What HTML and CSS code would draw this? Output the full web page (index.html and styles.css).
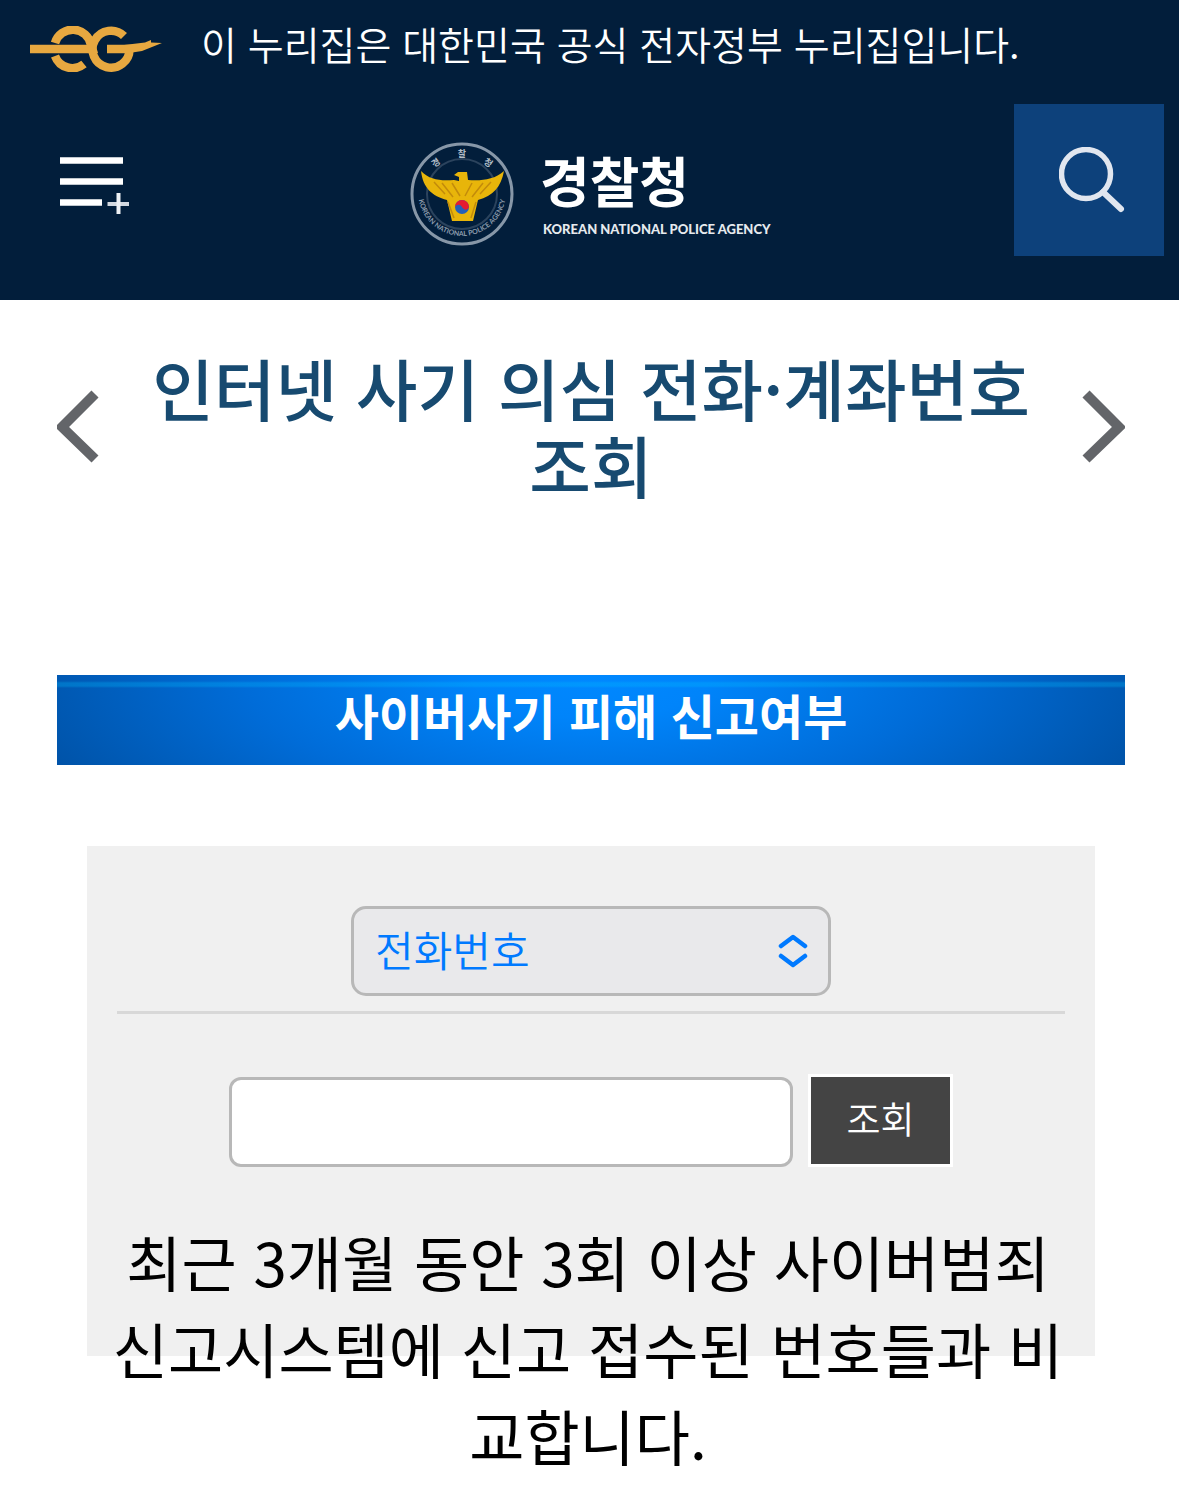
FILE: index.html
```html
<!DOCTYPE html>
<html lang="ko">
<head>
<meta charset="utf-8">
<meta name="viewport" content="width=device-width">
<title>경찰청</title>
<link rel="stylesheet" href="styles.css">
</head>
<body>
<header class="site-header">
  <div class="gov-bar">
    <svg class="gov-mark" viewBox="0 0 132 46" aria-hidden="true">
      <g fill="none" stroke="#e7a840" stroke-width="8.500">
        <path d="M0 23H62"/>
        <path d="M25 17A18.500 18.500 0 0 1 61 19L64 28"/>
        <path d="M25 30A18.500 18.500 0 0 0 54 38"/>
        <path d="M94 10A18.500 18.500 0 1 0 99.500 23H77"/>
      </g>
      <path d="M94 19L115 16.500L121 14L121 16.500L132 17L112 25L96 27.500Z" fill="#e7a840"/>
    </svg>
    <p class="gov-text">이 누리집은 대한민국 공식 전자정부 누리집입니다.</p>
  </div>
  <div class="nav-bar">
    <button class="icon-button menu-button" type="button" aria-label="전체 메뉴">
      <svg width="70" height="58" viewBox="0 0 70 58" aria-hidden="true">
        <path d="M0 3.500H63M0 24.500H63M0 45.500H42" fill="none" stroke="#fff" stroke-width="6.500"/>
        <path d="M47.500 47H69" fill="none" stroke="#d3d9e0" stroke-width="4"/>
        <path d="M58.500 36V57" fill="none" stroke="#eef1f4" stroke-width="4"/>
      </svg>
    </button>
    <a class="logo" href="#" aria-label="경찰청">
      <svg width="360" height="104" viewBox="0 0 360 104">
        <defs>
          <path id="ring-low" d="M8 50A44 44 0 0 0 96 50"/>
        </defs>
        <circle cx="52" cy="52" r="50" fill="none" stroke="#8797a8" stroke-width="3"/>
        <circle cx="52" cy="52" r="35" fill="none" stroke="#2b435d" stroke-width="2"/>
        <g class="ring-korean">
          <text x="52" y="15">찰</text>
          <text x="26" y="24" transform="rotate(-35 26 21)">경</text>
          <text x="78" y="24" transform="rotate(35 78 21)">청</text>
        </g>
        <text class="ring-english"><textPath href="#ring-low" startOffset="50%">KOREAN NATIONAL POLICE AGENCY</textPath></text>
        <path d="M11 29C20 38 30 39 44 38L49 39L49 35L44 33L48 30L57 30L58 38C71 39 84 38 94 29C91 45 83 54 68 58L63 79H42L37 58C22 54 13 46 11 29Z" fill="#e8b50a"/>
        <path d="M32 41L43 55M42 41L50 54M62 41L55 54M73 41L62 55M24 40L35 52M81 40L70 52M38 60L44 76M66 60L61 76" stroke="#c38b0b" stroke-width="1.500" fill="none"/>
        <circle cx="52" cy="65" r="7" fill="#2460b9"/>
        <path d="M45 65A7 7 0 0 1 59 65C57 70 53 67 52 65C50 62 47 62 45 65Z" fill="#e51b31"/>
        <text class="logo-name" x="130" y="61">경찰청</text>
        <text class="logo-english" x="133" y="92">KOREAN NATIONAL POLICE AGENCY</text>
      </svg>
    </a>
    <button class="icon-button search-button" type="button" aria-label="검색">
      <svg width="66" height="66" viewBox="0 0 66 66" aria-hidden="true">
        <circle cx="27" cy="27" r="24.500" fill="none" stroke="#e1e6ef" stroke-width="5.500"/>
        <path d="M44 45L62 62" fill="none" stroke="#e1e6ef" stroke-width="6" stroke-linecap="round"/>
      </svg>
    </button>
  </div>
</header>

<main class="content">
  <div class="title-row">
    <button class="icon-button" type="button" aria-label="이전">
      <svg width="44" height="74" viewBox="0 0 44 74" aria-hidden="true"><path d="M38 4L5 37L38 69" fill="none" stroke="#636569" stroke-width="10"/></svg>
    </button>
    <h1 class="page-title">인터넷 사기 의심 전화·계좌번호 조회</h1>
    <button class="icon-button" type="button" aria-label="다음">
      <svg width="44" height="74" viewBox="0 0 44 74" aria-hidden="true"><path d="M5 4L38 37L5 69" fill="none" stroke="#636569" stroke-width="10"/></svg>
    </button>
  </div>

  <h2 class="banner">사이버사기 피해 신고여부</h2>

  <form class="panel">
    <div class="type-row">
      <div class="select-box">
        <select class="type-select" aria-label="조회 유형">
          <option>전화번호</option>
        </select>
        <svg class="select-icon" width="30" height="36" viewBox="0 0 30 36" aria-hidden="true"><path d="M3 13L15 4L27 13M3 23L15 32L27 23" fill="none" stroke="#007aff" stroke-width="4.500" stroke-linecap="round" stroke-linejoin="round"/></svg>
      </div>
    </div>
    <div class="search-row">
      <input class="number-input" type="text" aria-label="번호">
      <button class="submit-button" type="submit">조회</button>
    </div>
    <p class="notice">최근 3개월 동안 3회 이상 사이버범죄 신고시스템에 신고 접수된 번호들과 비교합니다.</p>
  </form>
</main>
</body>
</html>
```
FILE: styles.css
```css
* {
  box-sizing: border-box;
}

body,
h1,
h2,
p {
  margin: 0;
}

body {
  background: #fff;
  color: #000;
  font-family: "Noto Sans CJK KR", sans-serif;
}

button,
input,
select {
  font-family: inherit;
}

.icon-button {
  display: flex;
  align-items: center;
  justify-content: center;
  padding: 0;
  border: 0;
  background: none;
}

.site-header {
  padding-bottom: 44px;
  background: #021e3b;
}

.gov-bar {
  display: flex;
  align-items: center;
  gap: 39px;
  height: 104px;
  padding: 0 30px 6px;
}

.gov-mark {
  width: 132px;
  height: 46px;
}

.gov-text {
  padding-bottom: 12px;
  color: #fff;
  font-family: "Noto Sans CJK KR DemiLight", "Noto Sans CJK KR", sans-serif;
  font-size: 39px;
  font-weight: 350;
  line-height: 58px;
}

.nav-bar {
  display: grid;
  grid-template-columns: 1fr auto 1fr;
  align-items: center;
  padding: 0 15px 0 16px;
}

.menu-button {
  justify-self: start;
  margin-left: 44px;
  padding-top: 12px;
}

.logo {
  display: block;
  padding-top: 28px;
}

.logo svg {
  display: block;
  overflow: visible;
}

.logo-name {
  fill: #fff;
  font-size: 54px;
  font-weight: 700;
}

.logo-english {
  fill: #e6eaee;
  font-family: Lato, sans-serif;
  font-size: 13px;
  font-weight: 900;
}

.ring-korean {
  fill: #b4bec9;
  font-size: 9px;
  font-weight: 700;
  text-anchor: middle;
}

.ring-english {
  fill: #8d9cac;
  font-family: Lato, sans-serif;
  font-size: 7px;
  font-weight: 700;
  text-anchor: middle;
}

.search-button {
  justify-self: end;
  width: 150px;
  height: 152px;
  padding-left: 6px;
  background: #0d417b;
}

.content {
  padding: 46px 54px 0 57px;
}

.title-row {
  display: flex;
  align-items: center;
  justify-content: space-between;
}

.page-title {
  flex: 1;
  padding: 2px 0 6px;
  color: #174a70;
  font-size: 67px;
  font-weight: 500;
  line-height: 77px;
  text-align: center;
  word-break: keep-all;
}

.banner {
  height: 90px;
  margin-top: 167px;
  background:
    linear-gradient(transparent 6px, rgba(0, 190, 255, 0.28) 8px, rgba(0, 190, 255, 0.28) 11px, transparent 13px),
    radial-gradient(ellipse 56% 240% at 50% 0, #0088ff 0%, #0084fa 20%, #006cd8 58%, #0052a6 100%);
  color: #fff;
  font-size: 48px;
  font-weight: 700;
  line-height: 78px;
  text-align: center;
}

/* The grey backdrop has a set height; the notice runs on below it. */
.panel {
  margin: 81px 30px 0;
  padding: 60px 30px 0;
  background: linear-gradient(#f0f0f0, #f0f0f0) top / 100% 510px no-repeat;
}

.type-row {
  display: flex;
  justify-content: center;
  padding-bottom: 15px;
  border-bottom: 3px solid #d8d8d8;
}

.select-box {
  position: relative;
  width: 480px;
}

.type-select {
  display: block;
  width: 100%;
  height: 90px;
  padding: 0 72px 6px 21px;
  border: 3px solid #b8b8b8;
  border-radius: 15px;
  background: #e9e9eb;
  color: #007aff;
  font-family: "Noto Sans CJK KR DemiLight", "Noto Sans CJK KR", sans-serif;
  font-size: 42px;
  font-weight: 350;
  appearance: none;
}

.select-icon {
  position: absolute;
  top: 27px;
  right: 23px;
  pointer-events: none;
}

.search-row {
  display: flex;
  align-items: flex-end;
  justify-content: center;
  gap: 15px;
  margin-top: 60px;
}

.number-input {
  width: 564px;
  height: 90px;
  padding: 0 18px;
  border: 3px solid #b8b8b8;
  border-radius: 12px;
  background: #fff;
  font-size: 42px;
}

.submit-button {
  width: 145px;
  height: 93px;
  padding: 0 0 6px;
  border: 3px solid #fff;
  background: #444;
  color: #fff;
  font-family: "Noto Sans CJK KR DemiLight", "Noto Sans CJK KR", sans-serif;
  font-size: 37px;
  font-weight: 350;
}

.notice {
  margin: 50px 0 0 -6px;
  font-size: 60px;
  font-weight: 400;
  line-height: 87px;
  text-align: center;
}
```
